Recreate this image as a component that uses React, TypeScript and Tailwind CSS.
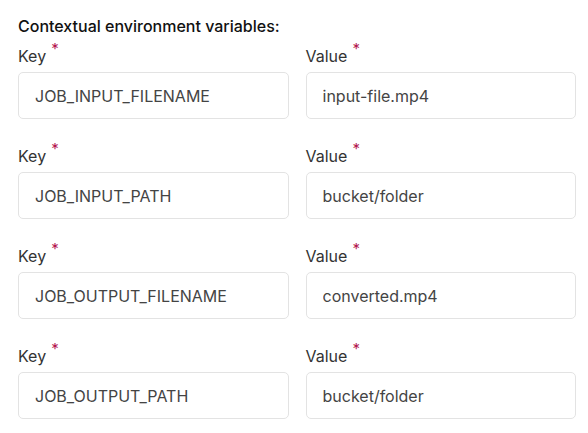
const rows = [
  { key: "JOB_INPUT_FILENAME", value: "input-file.mp4" },
  { key: "JOB_INPUT_PATH", value: "bucket/folder" },
  { key: "JOB_OUTPUT_FILENAME", value: "converted.mp4" },
  { key: "JOB_OUTPUT_PATH", value: "bucket/folder" },
];

function Field({ label, value }: { label: string; value: string }) {
  return (
    <div className="flex flex-col">
      <label className="flex h-6 items-center text-[16px] text-[#333]">
        {label}
        <span className="relative -top-[7px] ml-[5px] text-[15px] text-[#b3174f]">*</span>
      </label>
      <input
        readOnly
        value={value}
        className="mt-1 h-[47px] w-full rounded-[5px] border border-[#e3e3e3] bg-white px-4 text-[16px] text-[#444] outline-none"
      />
    </div>
  );
}

export default function App() {
  return (
    <div
      className="min-h-screen bg-white pl-[18px] pr-[12px] pt-[17px]"
      style={{ fontFamily: "Inter, 'Noto Sans', sans-serif" }}
    >
      <h2 className="text-[16px] leading-[18px] font-medium text-[#111]">
        Contextual environment variables:
      </h2>
      <div className="mt-[9px] flex flex-col gap-[25px]">
        {rows.map((r) => (
          <div key={r.key} className="grid grid-cols-2 gap-[17px]">
            <Field label="Key" value={r.key} />
            <Field label="Value" value={r.value} />
          </div>
        ))}
      </div>
    </div>
  );
}
